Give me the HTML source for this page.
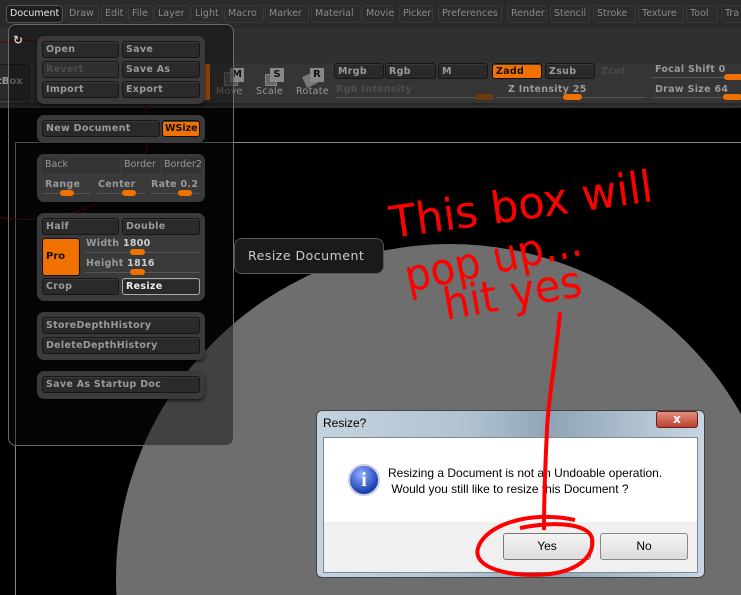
<!DOCTYPE html><html style="width:741px;height:595px;overflow:hidden"><head><style>
*{margin:0;padding:0;box-sizing:border-box}
body{width:741px;height:595px;overflow:hidden;background:#000;font-family:"DejaVu Sans","Liberation Sans",sans-serif;position:relative;font-size:10px}
.a{position:absolute}
.tab{position:absolute;top:5px;height:18px;border:1px solid #3a3a3a;border-radius:4px;background:#2c2c2c;color:#8a8a8a;font-size:9.5px;line-height:16px;padding-left:3px}
.b{position:absolute;height:17px;background:#2a2a2a;border:1px solid #161616;border-radius:3px;color:#9a9a9a;font-weight:bold;font-size:9.5px;line-height:15px;padding-left:3px;letter-spacing:.3px;box-shadow:inset 0 1px 0 #3a3a3a;overflow:hidden;white-space:nowrap}
.grp{position:absolute;background:#3a3a3a;border-radius:7px;box-shadow:0 2px 3px rgba(0,0,0,.6)}
.or{background:#f07000!important;color:#111!important;border-color:#111}
.sl{position:absolute;height:1px;background:#555}
.kn{position:absolute;width:19px;height:6px;border-radius:3px;background:#f07000}
.lbl{position:absolute;color:#9a9a9a;font-weight:bold;font-size:9.5px;letter-spacing:.3px;white-space:nowrap}
</style></head><body>
<div class="a" style="left:0;top:0;width:741px;height:595px;overflow:hidden">
<div class="a" style="left:0;top:0;width:741px;height:28px;background:#2a2a2a"></div>
<div class="a" style="left:0;top:28px;width:741px;height:80px;background:#303030"></div>
<div class="a" style="left:0;top:63px;width:741px;height:42px;background:#353535;border-bottom:2px solid #262626"></div>
<div class="tab" style="left:6px;width:57px;color:#e8e8e8;background:#1e1e1e;border-color:#555">Document</div>
<div class="tab" style="left:65px;width:34px">Draw</div>
<div class="tab" style="left:101px;width:26px">Edit</div>
<div class="tab" style="left:128px;width:25px">File</div>
<div class="tab" style="left:154px;width:36px">Layer</div>
<div class="tab" style="left:191px;width:32px">Light</div>
<div class="tab" style="left:224px;width:40px">Macro</div>
<div class="tab" style="left:265px;width:44px">Marker</div>
<div class="tab" style="left:311px;width:50px">Material</div>
<div class="tab" style="left:362px;width:32px">Movie</div>
<div class="tab" style="left:399px;width:34px">Picker</div>
<div class="tab" style="left:438px;width:64px">Preferences</div>
<div class="tab" style="left:507px;width:40px">Render</div>
<div class="tab" style="left:550px;width:40px">Stencil</div>
<div class="tab" style="left:593px;width:43px">Stroke</div>
<div class="tab" style="left:638px;width:46px">Texture</div>
<div class="tab" style="left:686px;width:32px">Tool</div>
<div class="tab" style="left:721px;width:30px">Tra</div>
<div class="a" style="left:-4px;top:64px;width:34px;height:36px;background:#2a2a2a;border:1px solid #1a1a1a;border-radius:4px;color:#9a9a9a;font-weight:bold;font-size:10px;line-height:34px">tBox</div>
<div class="a" style="left:203px;top:64px;width:7px;height:36px;background:#f07000;border-radius:2px"></div>
<div class="a" style="left:224px;top:72px;width:14px;height:14px;background:#555;border:1px solid #777"></div><div class="a" style="left:230px;top:68px;width:14px;height:14px;background:#888;color:#111;font-weight:bold;font-size:10px;text-align:center;line-height:14px">M</div>
<div class="lbl" style="left:216px;top:86px;font-weight:normal;color:#888">Move</div>
<div class="a" style="left:265px;top:74px;width:12px;height:12px;background:#666;border:1px solid #888"></div><div class="a" style="left:270px;top:68px;width:14px;height:14px;background:#888;color:#111;font-weight:bold;font-size:10px;text-align:center;line-height:14px">S</div>
<div class="lbl" style="left:256px;top:86px;font-weight:normal;color:#999">Scale</div>
<div class="a" style="left:304px;top:74px;width:12px;height:12px;background:#777;transform:rotate(-25deg)"></div><div class="a" style="left:310px;top:68px;width:14px;height:14px;background:#888;color:#111;font-weight:bold;font-size:10px;text-align:center;line-height:14px">R</div>
<div class="lbl" style="left:296px;top:86px;font-weight:normal;color:#999">Rotate</div>
<div class="b" style="left:334px;top:63px;width:50px;height:16px">Mrgb</div>
<div class="b" style="left:385px;top:63px;width:51px;height:16px">Rgb</div>
<div class="b" style="left:438px;top:63px;width:50px;height:16px">M</div>
<div class="b or" style="left:492px;top:63px;width:50px;height:16px">Zadd</div>
<div class="b" style="left:545px;top:63px;width:50px;height:16px">Zsub</div>
<div class="lbl" style="left:601px;top:66px;color:#4a4a4a">Zcut</div>
<div class="lbl" style="left:655px;top:64px">Focal Shift 0</div>
<div class="sl" style="left:652px;top:77px;width:90px"></div><div class="kn" style="left:724px;top:74px"></div>
<div class="lbl" style="left:336px;top:84px;color:#4e4e4e">Rgb Intensity</div>
<div class="sl" style="left:336px;top:97px;width:150px"></div><div class="kn" style="left:475px;top:94px;background:#6a3a10"></div>
<div class="lbl" style="left:508px;top:84px">Z Intensity 25</div>
<div class="sl" style="left:496px;top:97px;width:150px"></div><div class="kn" style="left:563px;top:94px"></div>
<div class="lbl" style="left:655px;top:84px">Draw Size 64</div>
<div class="sl" style="left:652px;top:97px;width:90px"></div><div class="kn" style="left:723px;top:94px"></div>
<div class="a" style="left:15px;top:142px;width:726px;height:1px;background:#888"></div>
<div class="a" style="left:15px;top:142px;width:1px;height:453px;background:#888"></div>
<div class="a" style="left:-100px;top:40px;width:250px;height:180px;border:1px solid #600;border-radius:50%"></div>
<div class="a" style="left:116px;top:244px;width:668px;height:668px;border-radius:50%;background:#6e6e6e"></div>
<div class="a" style="left:8px;top:24px;width:226px;height:422px;border:1px solid #6a6a6a;border-radius:8px;background:rgba(10,10,10,.45)"></div>
<div class="a" style="left:13px;top:33px;color:#ccc;font-size:12px;font-weight:bold">↻</div>
<div class="grp" style="left:37px;top:36px;width:168px;height:68px"></div>
<div class="b" style="left:42px;top:41px;width:77px">Open</div>
<div class="b" style="left:122px;top:41px;width:78px">Save</div>
<div class="b" style="left:42px;top:61px;width:77px;color:#4c4c4c;background:#303030">Revert</div>
<div class="b" style="left:122px;top:61px;width:78px">Save As</div>
<div class="b" style="left:42px;top:81px;width:77px">Import</div>
<div class="b" style="left:122px;top:81px;width:78px">Export</div>
<div class="grp" style="left:37px;top:115px;width:168px;height:28px"></div>
<div class="b" style="left:42px;top:120px;width:118px">New Document</div>
<div class="b or" style="left:162px;top:120px;width:38px;padding-left:2px;letter-spacing:0">WSize</div>
<div class="grp" style="left:37px;top:154px;width:168px;height:48px"></div>
<div class="a" style="left:42px;top:157px;width:78px;height:16px;background:#333;color:#999;font-size:9.5px;padding:2px 3px">Back</div>
<div class="a" style="left:122px;top:157px;width:38px;height:16px;background:#333;color:#999;font-size:9.5px;padding:2px 2px">Border</div>
<div class="a" style="left:162px;top:157px;width:40px;height:16px;background:#333;color:#999;font-size:9.5px;padding:2px 2px">Border2</div>
<div class="lbl" style="left:45px;top:179px">Range</div><div class="lbl" style="left:98px;top:179px">Center</div><div class="lbl" style="left:151px;top:179px">Rate 0.2</div>
<div class="sl" style="left:43px;top:193px;width:48px"></div><div class="sl" style="left:97px;top:193px;width:48px"></div><div class="sl" style="left:151px;top:193px;width:48px"></div>
<div class="kn" style="left:60px;top:190px;width:14px"></div><div class="kn" style="left:122px;top:190px;width:14px"></div><div class="kn" style="left:178px;top:190px;width:14px"></div>
<div class="grp" style="left:37px;top:213px;width:168px;height:88px"></div>
<div class="b" style="left:42px;top:218px;width:77px">Half</div>
<div class="b" style="left:122px;top:218px;width:78px">Double</div>
<div class="a" style="left:42px;top:238px;width:38px;height:38px;background:#f07000;border:1px solid #111;border-radius:3px;color:#111;font-weight:bold;font-size:10px;line-height:36px;padding-left:3px">Pro</div>
<div class="lbl" style="left:86px;top:238px">Width <span style="color:#ccc">1800</span></div>
<div class="sl" style="left:85px;top:252px;width:115px"></div><div class="kn" style="left:130px;top:249px;width:15px"></div>
<div class="lbl" style="left:86px;top:258px">Height <span style="color:#ccc">1816</span></div>
<div class="sl" style="left:85px;top:272px;width:115px"></div><div class="kn" style="left:130px;top:269px;width:15px"></div>
<div class="b" style="left:42px;top:278px;width:77px">Crop</div>
<div class="b" style="left:122px;top:278px;width:78px;color:#eee;border-color:#aaa">Resize</div>
<div class="grp" style="left:37px;top:312px;width:168px;height:48px"></div>
<div class="b" style="left:42px;top:317px;width:158px">StoreDepthHistory</div>
<div class="b" style="left:42px;top:337px;width:158px">DeleteDepthHistory</div>
<div class="grp" style="left:37px;top:371px;width:168px;height:28px"></div>
<div class="b" style="left:42px;top:376px;width:158px">Save As Startup Doc</div>
<div class="a" style="left:234px;top:238px;width:150px;height:36px;background:#1a1a1a;border:1px solid #555;border-radius:8px;color:#ccc;font-size:12.5px;line-height:34px;padding-left:13px;letter-spacing:.5px">Resize Document</div>
<div class="a" style="left:316px;top:410px;width:389px;height:168px;background:linear-gradient(90deg,#c4d3df,#b0c2d0 40%,#8fa4b6 60%,#c8d6e2);border:1px solid #444;border-radius:6px"></div>
<div class="a" style="left:323px;top:416px;font-family:'Liberation Sans',sans-serif;font-size:12px;color:#000">Resize?</div>
<div class="a" style="left:656px;top:411px;width:42px;height:17px;background:linear-gradient(#e09080,#c04030);border:1px solid #622;border-radius:3px;color:#fff;font-weight:bold;text-align:center;font-size:12px;line-height:15px">x</div>
<div class="a" style="left:323px;top:437px;width:375px;height:136px;background:#fff;border:1px solid #7a8a99"></div>
<div class="a" style="left:324px;top:522px;width:373px;height:50px;background:#f0f0f0"></div>
<div class="a" style="left:348px;top:464px;width:32px;height:32px;border-radius:50%;background:radial-gradient(circle at 40% 30%,#8fb0ff,#1a3fb0 70%);border:2px solid #ccd;color:#fff;font-family:'Liberation Serif',serif;font-weight:bold;font-size:20px;text-align:center;line-height:28px">i</div>
<div class="a" style="left:388px;top:465px;font-family:'Liberation Sans',sans-serif;font-size:12px;color:#000;line-height:16px">Resizing a Document is not an Undoable operation.<br>&nbsp;Would you still like to resize this Document ?</div>
<div class="a" style="left:503px;top:533px;width:88px;height:27px;background:linear-gradient(#f4f4f4,#dcdcdc);border:1px solid #777;border-radius:3px;font-family:'Liberation Sans',sans-serif;font-size:12px;text-align:center;line-height:25px">Yes</div>
<div class="a" style="left:600px;top:533px;width:88px;height:27px;background:linear-gradient(#f4f4f4,#dcdcdc);border:1px solid #888;border-radius:3px;font-family:'Liberation Sans',sans-serif;font-size:12px;text-align:center;line-height:25px">No</div>
<svg class="a" style="left:0;top:0" width="741" height="595">
<g fill="#f00" font-family="'DejaVu Sans',sans-serif" font-size="44">
<text x="392" y="238" transform="rotate(-8 392 238)" textLength="265" lengthAdjust="spacingAndGlyphs">This box will</text>
<text x="408" y="292" transform="rotate(-12 408 292)" textLength="180" lengthAdjust="spacingAndGlyphs">pop up...</text>
<text x="446" y="320" transform="rotate(-10 446 320)" textLength="140" lengthAdjust="spacingAndGlyphs">hit yes</text>
</g>
<path d="M560 312 C556 360 548 400 547 430 C545 470 544 500 544 530" stroke="#f00" stroke-width="4" fill="none"/>
<path d="M575 520 C530 510 485 525 478 548 C472 568 510 578 550 574 C580 570 595 555 592 538 C588 525 560 520 520 528" stroke="#f00" stroke-width="4" fill="none"/>
</svg>
</div>
</body></html>
